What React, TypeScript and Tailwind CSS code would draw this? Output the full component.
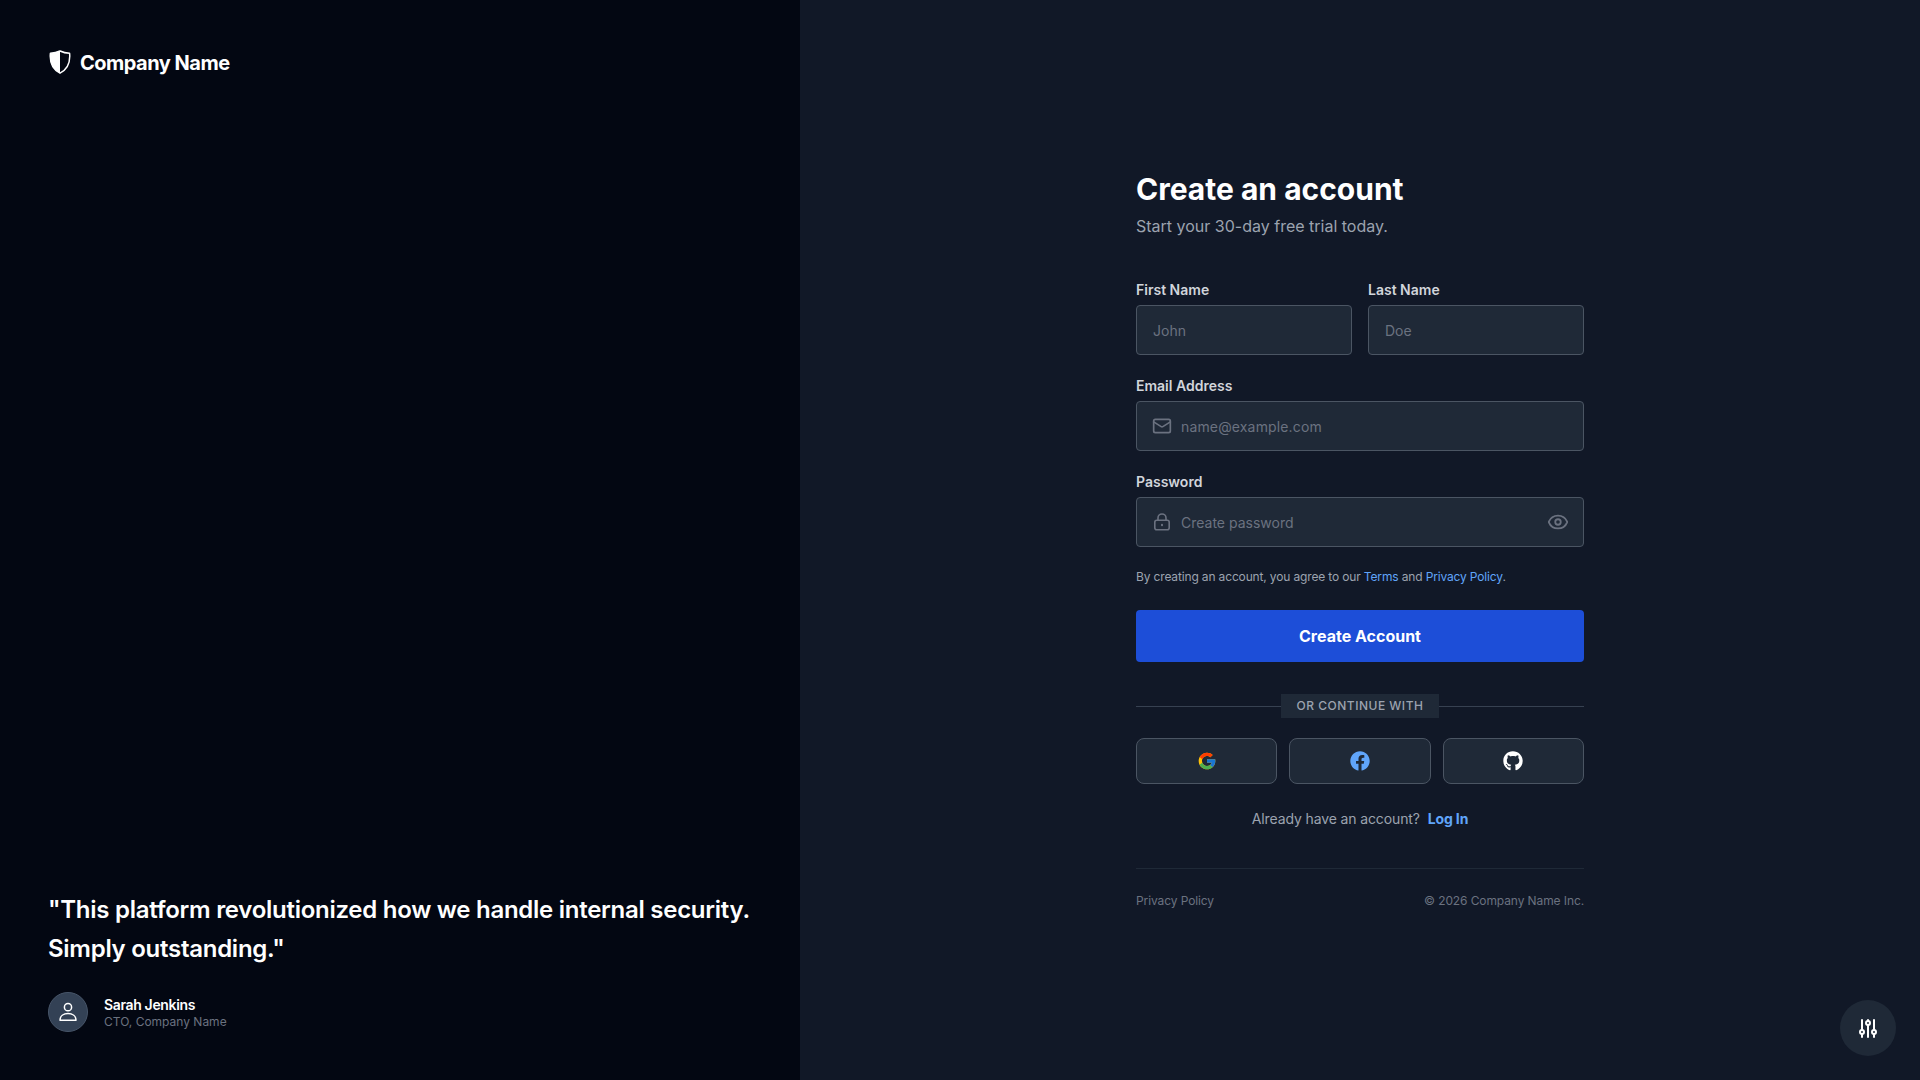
import { Eye, Mail } from "lucide-react";
import { FaFacebook, FaGithub } from "react-icons/fa";
import { FcGoogle } from "react-icons/fc";

function ShieldLogo() {
  return (
    <svg width="24" height="24" viewBox="0 0 24 24" fill="none">
      <path d="M12 1 C14.8 2.4 18 3.2 21.6 3.2 C22.4 11.5 20.4 18.8 12 23.2 C3.6 18.8 1.6 11.5 2.4 3.2 C6 3.2 9.2 2.4 12 1 Z" stroke="white" strokeWidth="1.5" strokeLinejoin="round" />
      <path d="M12 1 C9.2 2.4 6 3.2 2.4 3.2 C1.6 11.5 3.6 18.8 12 23.2 Z" fill="white" />
    </svg>
  );
}

function SlidersIcon() {
  return (
    <svg width="24" height="24" viewBox="0 0 24 24" fill="none" stroke="white" strokeWidth="2" strokeLinecap="round">
      <path d="M6 4v10M6 18v3M12 4v1M12 9v12M18 4v10M18 18v3" />
      <circle cx="6" cy="16" r="2" />
      <circle cx="12" cy="7" r="2" />
      <circle cx="18" cy="16" r="2" />
    </svg>
  );
}

function UserIcon() {
  return (
    <svg width="24" height="24" viewBox="0 0 24 24" fill="none" stroke="white" strokeWidth="1.5" strokeLinejoin="round">
      <circle cx="12" cy="7.2" r="3.6" />
      <path d="M4 20.2 C4 16 7.5 13.6 12 13.6 C16.5 13.6 20 16 20 20.2 Z" />
    </svg>
  );
}

function LockIcon() {
  return (
    <svg width="20" height="20" viewBox="0 0 20 20" fill="none" stroke="currentColor" strokeWidth="1.6" strokeLinecap="round" strokeLinejoin="round">
      <rect x="2.8" y="8.2" width="14.4" height="9.6" rx="2" />
      <path d="M6 8.2V6a4 4 0 0 1 8 0v2.2" />
      <path d="M10 12.8v.4" strokeWidth="2" />
    </svg>
  );
}

const labelClass = "mb-1 block text-sm font-semibold leading-[22px] text-[#d1d5db]";
const inputClass =
  "h-[50px] w-full rounded border border-[#4b5563] bg-[#1f2937] text-sm text-white outline-none placeholder:text-[#6b7280]";

export default function App() {
  return (
    <div className="flex h-screen w-full bg-[#111827] font-['Inter',sans-serif]">
      {/* Left panel */}
      <aside className="flex w-[800px] shrink-0 flex-col justify-between bg-[#030712] p-12">
        <div className="flex h-7 items-center gap-2">
          <ShieldLogo />
          <span className="mt-0.5 text-xl leading-7 font-bold tracking-[-0.5px] text-white">Company Name</span>
        </div>
        <div>
          <p className="mb-6 text-2xl leading-[39px] font-semibold tracking-[-0.27px] text-white">
            "This platform revolutionized how we handle internal security. Simply outstanding."
          </p>
          <div className="flex items-center gap-4">
            <div className="flex size-10 items-center justify-center rounded-full border border-[#475569] bg-[#334155]">
              <UserIcon />
            </div>
            <div className="pt-0.5">
              <div className="text-sm leading-[18px] font-semibold tracking-[-0.35px] text-white">Sarah Jenkins</div>
              <div className="text-xs leading-4 text-[#6b7280]">CTO, Company Name</div>
            </div>
          </div>
        </div>
      </aside>

      {/* Form */}
      <main className="flex flex-1 items-center justify-center">
        <div className="w-[448px]">
          <h1 className="text-3xl font-bold text-white">Create an account</h1>
          <p className="mt-[7px] mb-[41px] text-base text-[#9ca3af]">Start your 30-day free trial today.</p>

          <div className="flex flex-col gap-5">
            <div className="grid grid-cols-2 gap-4">
              <div>
                <label className={labelClass}>First Name</label>
                <input className={`${inputClass} px-4`} placeholder="John" />
              </div>
              <div>
                <label className={labelClass}>Last Name</label>
                <input className={`${inputClass} px-4`} placeholder="Doe" />
              </div>
            </div>
            <div>
              <label className={labelClass}>Email Address</label>
              <div className="relative">
                <Mail size={20} className="absolute top-[15px] left-4 text-[#6b7280]" />
                <input className={`${inputClass} pr-4 pl-11 placeholder:tracking-[0.15px]`} placeholder="name@example.com" />
              </div>
            </div>
            <div>
              <label className={labelClass}>Password</label>
              <div className="relative">
                <span className="absolute top-[15px] left-4 text-[#6b7280]">
                  <LockIcon />
                </span>
                <input className={`${inputClass} pr-11 pl-11`} placeholder="Create password" />
                <Eye size={22} className="absolute top-3.5 right-[15px] text-[#6b7280]" />
              </div>
            </div>
          </div>

          <p className="mt-[22px] text-xs leading-4 tracking-[-0.15px] text-[#9ca3af]">
            By creating an account, you agree to our <a className="text-[#60a5fa]">Terms</a> and{" "}
            <a className="text-[#60a5fa]">Privacy Policy</a>.
          </p>

          <button className="mt-[25px] h-[52px] w-full rounded bg-[#1d4ed8] font-bold text-white">Create Account</button>

          <div className="relative mt-8 flex h-6 items-center justify-center">
            <div className="absolute inset-x-0 top-3 border-t border-[#374151]" />
            <span className="relative bg-[#1f2937] px-4 text-xs leading-6 font-medium tracking-[0.5px] text-[#9ca3af]">OR CONTINUE WITH</span>
          </div>

          <div className="mt-5 grid grid-cols-3 gap-3">
            <button className="flex h-[46px] items-center justify-center rounded-lg border border-[#4b5563] bg-[#1f2937]">
              <FcGoogle size={20} />
            </button>
            <button className="flex h-[46px] items-center justify-center rounded-lg border border-[#4b5563] bg-[#1f2937]">
              <FaFacebook size={20} className="text-[#60a5fa]" />
            </button>
            <button className="flex h-[46px] items-center justify-center rounded-lg border border-[#4b5563] bg-[#1f2937]">
              <FaGithub size={20} className="text-white" />
            </button>
          </div>

          <p className="mt-[25px] text-center text-sm leading-5 tracking-[-0.12px] text-[#9ca3af]">
            Already have an account? <a className="ml-1 font-bold text-[#60a5fa]">Log In</a>
          </p>

          <div className="mt-[39px] flex justify-between border-t border-[#1f2937] pt-6 text-xs leading-4 tracking-[-0.1px] text-[#6b7280]">
            <span>Privacy Policy</span>
            <span>© 2026 Company Name Inc.</span>
          </div>
        </div>
      </main>

      {/* Floating settings button */}
      <button className="fixed right-6 bottom-6 flex size-14 items-center justify-center rounded-full bg-[#1f2937]">
        <SlidersIcon />
      </button>
    </div>
  );
}
